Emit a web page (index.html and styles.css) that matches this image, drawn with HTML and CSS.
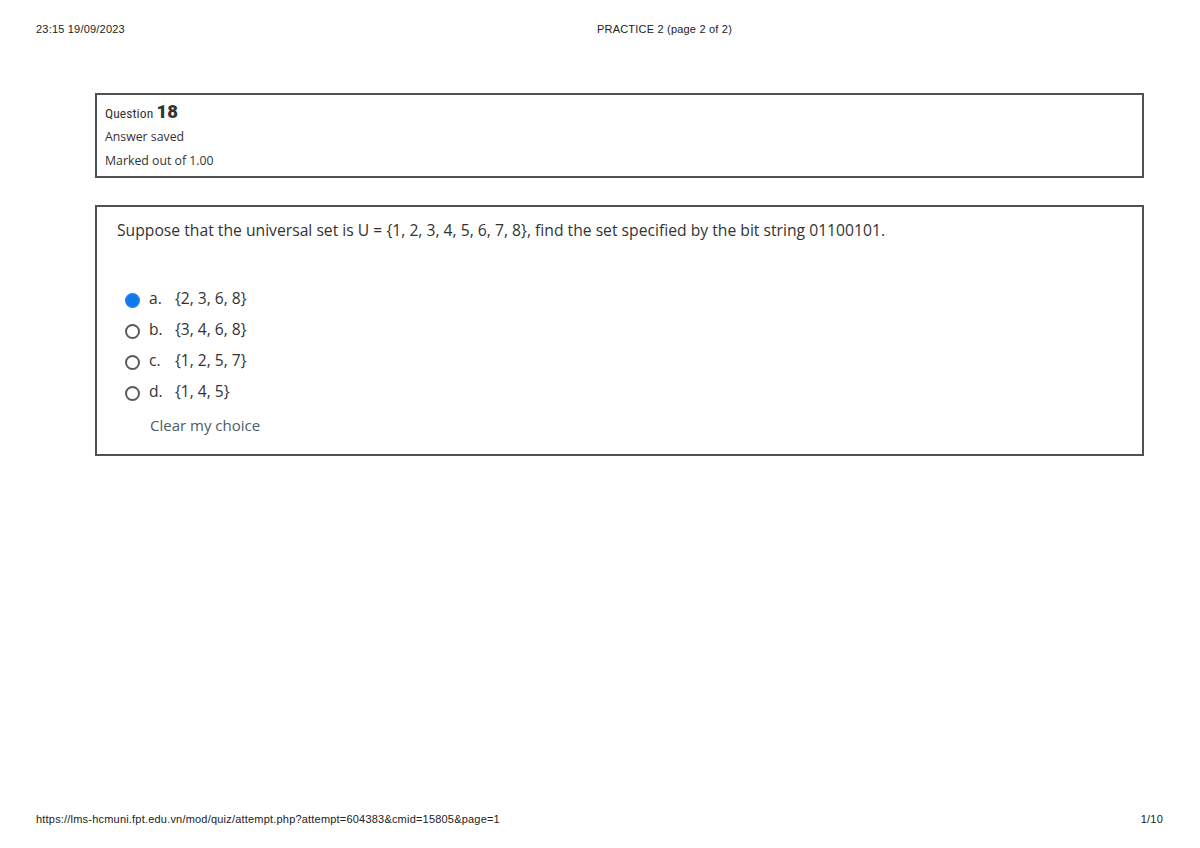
FILE: index.html
```html
<!DOCTYPE html>
<html>
<head>
<meta charset="utf-8">
<link rel="stylesheet" href="styles.css">
</head>
<body>
<div class="page">
  <header class="print-head">
    <span class="head-left">23:15 19/09/2023</span>
    <span class="head-center">PRACTICE 2 (page 2 of 2)</span>
  </header>
  <main class="content">
    <section class="info">
      <div class="qno">Question <span class="num">18</span></div>
      <div class="state">Answer saved</div>
      <div class="grade">Marked out of 1.00</div>
    </section>
    <section class="formulation">
      <p class="qtext">Suppose that the universal set is U = {1, 2, 3, 4, 5, 6, 7, 8}, find the set specified by the bit string 01100101.</p>
      <div class="answers">
        <div class="opt"><span class="radio checked"></span><span class="lbl">a.</span><span class="val">{2, 3, 6, 8}</span></div>
        <div class="opt"><span class="radio"></span><span class="lbl">b.</span><span class="val">{3, 4, 6, 8}</span></div>
        <div class="opt"><span class="radio"></span><span class="lbl">c.</span><span class="val">{1, 2, 5, 7}</span></div>
        <div class="opt"><span class="radio"></span><span class="lbl">d.</span><span class="val">{1, 4, 5}</span></div>
        <div class="clear">Clear my choice</div>
      </div>
    </section>
  </main>
  <footer class="print-foot">
    <span>https://lms-hcmuni.fpt.edu.vn/mod/quiz/attempt.php?attempt=604383&amp;cmid=15805&amp;page=1</span>
    <span>1/10</span>
  </footer>
</div>
</body>
</html>
```
FILE: styles.css
```css
html, body { margin: 0; padding: 0; background: #fff; }
.page {
  width: 1200px; height: 848px;
  display: flex; flex-direction: column;
}
.print-head {
  display: flex;
  padding: 22px 36px 0 36px;
  font-family: "Liberation Sans", Arial, sans-serif;
  font-size: 11px; color: #222; height: 14px; line-height: 14px;
  letter-spacing: 0.2px;
}
.head-left { width: 561px; }
.content { padding: 57px 56px 0 95px; flex: 1; }
.info {
  border: 2px solid #4b5358;
  height: 85px; box-sizing: border-box;
  width: 1049px;
  padding: 8px 8px 0 8px;
  font-family: "Open Sans", sans-serif; font-size: 12.3px; color: #333;
}
.qno { font-family: "Roboto Condensed", Roboto, sans-serif; font-size: 13.5px; line-height: 18px; letter-spacing: 0.1px; }
.qno .num { font-family: Roboto, sans-serif; font-weight: 900; font-size: 18.5px; letter-spacing: 0; }
.state { line-height: 17px; margin-top: 6px; }
.grade { line-height: 17px; margin-top: 7px; }
.formulation {
  margin-top: 27px;
  border: 2px solid #4b5358;
  width: 1049px; height: 251px; box-sizing: border-box;
  padding: 12px 20px 0 20px;
  font-family: "Open Sans", sans-serif; color: #333;
}
.qtext { margin: 0; font-size: 15.7px; line-height: 23px; }
.answers { margin-top: 40px; padding-left: 8px; font-size: 15.6px; }
.opt { display: flex; align-items: center; height: 31px; }
.radio {
  width: 11px; height: 11px; border: 2px solid #5a5a5a; border-radius: 50%;
  margin-right: 9px; margin-top: 5px; flex: none;
}
.radio.checked { background: #1177ee; border-color: #1a7ff0; }
.lbl { width: 26px; }
.clear { padding-left: 25px; margin-top: 8px; font-size: 15px; color: #4b5d66; line-height: 23px; }
.print-foot {
  display: flex; justify-content: space-between;
  padding: 0 37px 22px 36px;
  font-family: "Liberation Sans", Arial, sans-serif;
  font-size: 11px; color: #222; line-height: 14px;
  letter-spacing: 0.2px;
}
```
